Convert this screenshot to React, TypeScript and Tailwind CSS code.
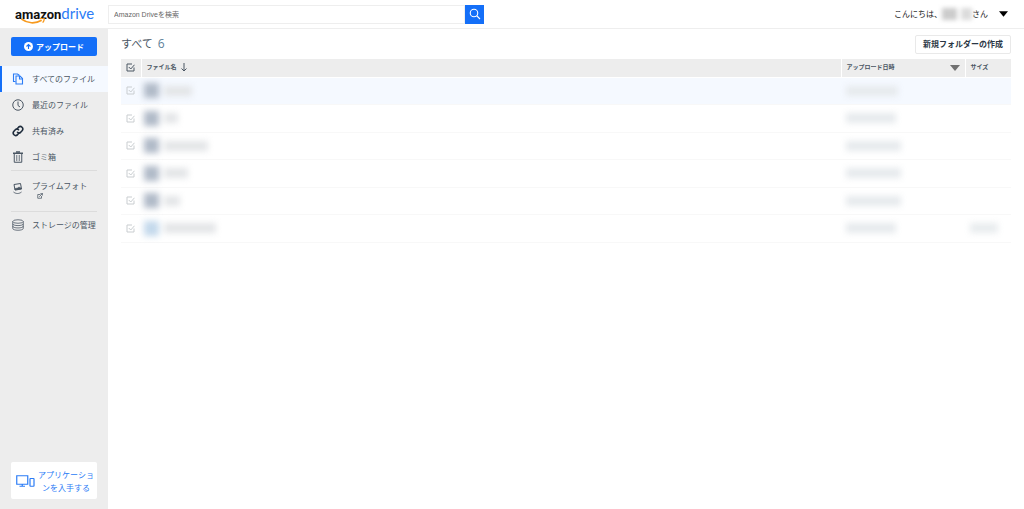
import { useState } from 'react'

type Row = { name: string; kind: string; date: string; size?: string }

// hidden values are drawn as blurred bars, these are the widths
const rows: Row[] = [
  { name: 'w-[28px]', kind: 'folder', date: 'w-[52px]' },
  { name: 'w-[14px]', kind: 'folder', date: 'w-[50px]' },
  { name: 'w-[44px]', kind: 'folder', date: 'w-[55px]' },
  { name: 'w-[24px]', kind: 'folder', date: 'w-[55px]' },
  { name: 'w-[16px]', kind: 'folder', date: 'w-[55px]' },
  { name: 'w-[52px]', kind: 'file', date: 'w-[50px]', size: 'w-[28px]' },
]

function CheckIcon({ className }: { className: string }) {
  return (
    <svg viewBox="0 0 18 18" className={'block h-[9px] w-[9px] ' + className} fill="none" stroke="currentColor" strokeWidth="2">
      <path d="M12 2H2v14h14V9" />
      <path d="M5.5 8l4 4L17 3.5" />
    </svg>
  )
}

function FilesIcon() {
  return (
    <svg viewBox="0 0 24 24" className="h-3 w-3 text-[#2b7cf6]" fill="none" stroke="currentColor" strokeWidth="2.2">
      <path d="M7 17H3V2h8l4 3" />
      <path d="M8 6h8l5 5v11H8z" />
      <path d="M15 6v6h6" />
    </svg>
  )
}

function ClockIcon() {
  return (
    <svg viewBox="0 0 24 24" className="h-3 w-3" fill="none" stroke="currentColor" strokeWidth="2">
      <circle cx="12" cy="12" r="10.5" />
      <path d="M12 5v8l4 3" />
    </svg>
  )
}

function LinkIcon() {
  return (
    <svg viewBox="0 0 24 24" className="h-3 w-3 text-[#1f2d3d]" fill="none" stroke="currentColor" strokeWidth="3.2" strokeLinecap="round">
      <path d="M10 8l3.5-4a5 5 0 0 1 7 7L17 15a5 5 0 0 1-6-.5" />
      <path d="M14 16l-3.5 4a5 5 0 0 1-7-7L7 9a5 5 0 0 1 6 .5" />
    </svg>
  )
}

function TrashIcon() {
  return (
    <svg viewBox="0 0 24 24" className="h-3 w-3" fill="none" stroke="currentColor" strokeWidth="2">
      <path d="M2 4.5h20" strokeWidth="3" />
      <path d="M8 2h8" strokeWidth="3" />
      <path d="M4.5 5v17.5h15V5" />
      <path d="M9.5 8v12M14.5 8v12" strokeWidth="1.6" />
    </svg>
  )
}

function PhotoIcon() {
  return (
    <svg viewBox="0 0 24 24" className="h-3 w-3" fill="none" stroke="currentColor" strokeWidth="2">
      <path d="M4 3l13-2 2 11-13 2z" />
      <path d="M6 11l5-1 3-2 4 2 1 2-13 2z" fill="currentColor" strokeWidth="1" />
      <path d="M3 18c5 4 11 4 16 0" strokeWidth="1.8" />
    </svg>
  )
}

function StorageIcon() {
  return (
    <svg viewBox="0 0 24 24" className="h-3 w-3" fill="none" stroke="currentColor" strokeWidth="1.6">
      <ellipse cx="12" cy="5" rx="10.5" ry="3.5" />
      <path d="M1.5 5v14c0 2 4.5 3.5 10.5 3.5s10.5-1.5 10.5-3.5V5" />
      <path d="M1.5 9.7c0 2 4.5 3.5 10.5 3.5s10.5-1.5 10.5-3.5M1.5 14.4c0 2 4.5 3.5 10.5 3.5s10.5-1.5 10.5-3.5" />
    </svg>
  )
}

function Logo() {
  return (
    <a href="#" className="relative ml-[15px] flex w-[93px] shrink-0 items-baseline leading-6">
      <span className="font-['Roboto',sans-serif] text-[13px] font-bold text-[#111]">amazon</span>
      <span className="font-['Lato',sans-serif] text-[15px] text-[#2b7cf6]">drive</span>
      <svg viewBox="0 0 72 18" className="absolute left-[6px] top-[17px] h-[6px] w-6" fill="none">
        <path d="M1 3c18 14 42 15 61 4" stroke="#f79a1e" strokeWidth="5" />
        <path d="M56 2c6-2 12-2 13 0s-1 8-4 12" stroke="#f79a1e" strokeWidth="4" />
      </svg>
    </a>
  )
}

const navItem = 'flex h-[26px] items-center border-l-2 pl-[10px] text-[8px]'

export default function App() {
  const [query, setQuery] = useState('')

  return (
    <div className="flex min-h-screen flex-col bg-white font-['Open_Sans','Noto_Sans_CJK_JP',sans-serif] text-[#4a5663]">
      <header className="flex h-[29px] items-center border-b border-[#eeeeee]">
        <Logo />
        <form className="flex w-[376px]" onSubmit={e => e.preventDefault()}>
          <input
            type="search"
            aria-label="Amazon Driveを検索"
            placeholder="Amazon Driveを検索"
            value={query}
            onChange={e => setQuery(e.target.value)}
            className="h-[19px] min-w-0 flex-1 border border-[#eeeeee] px-[5px] font-['Liberation_Sans','Noto_Sans_CJK_JP',sans-serif] text-[7px] placeholder:text-[#666] focus:outline-none"
          />
          <button aria-label="検索" className="flex h-[19px] w-[19px] items-center justify-center bg-[#146ff8] text-white">
            <svg viewBox="0 0 24 24" className="h-3 w-3" fill="none" stroke="currentColor" strokeWidth="2.2">
              <circle cx="10" cy="10" r="7.5" />
              <path d="M15.5 15.5L22 22" />
            </svg>
          </button>
        </form>
        <button className="ml-auto mr-4 flex items-center text-[8px] text-[#222]">
          <span>こんにちは、</span>
          <span className="flex w-[30px] gap-1 blur-[2px]">
            <span className="h-[12px] w-[15px] bg-[#cccccc]" />
            <span className="h-[12px] w-[11px] bg-[#dcdcdc]" />
          </span>
          <span>さん</span>
          <svg viewBox="0 0 10 6" className="ml-[11px] h-[6px] w-[9px]">
            <path d="M0 0h10L5 6z" fill="#000" />
          </svg>
        </button>
      </header>

      <div className="flex flex-1">
        <nav className="flex w-[108px] shrink-0 flex-col bg-[#ededed]">
          <button className="mx-[11px] mb-[10px] mt-2 flex h-[19px] items-center justify-center gap-[3px] rounded-[2px] bg-[#146ff8] text-[8px] font-bold text-white">
            <svg viewBox="0 0 18 18" className="h-[9px] w-[9px]">
              <circle cx="9" cy="9" r="9" fill="#fff" />
              <path d="M9 14V5M5 9l4-4 4 4" fill="none" stroke="#146ff8" strokeWidth="2.2" />
            </svg>
            アップロード
          </button>

          <a href="#" className={navItem + ' border-[#146ff8] bg-[#f5f9ff]'}>
            <span className="flex w-5"><FilesIcon /></span>すべてのファイル
          </a>
          <a href="#" className={navItem + ' border-transparent'}>
            <span className="flex w-5"><ClockIcon /></span>最近のファイル
          </a>
          <a href="#" className={navItem + ' border-transparent'}>
            <span className="flex w-5"><LinkIcon /></span>共有済み
          </a>
          <a href="#" className={navItem + ' border-transparent'}>
            <span className="flex w-5"><TrashIcon /></span>ゴミ箱
          </a>
          <hr className="mx-[11px] border-[#dcdcdc]" />
          <a href="#" className="flex h-10 items-center pb-1 pl-3 text-[8px]">
            <span className="flex w-5"><PhotoIcon /></span>
            <span className="flex flex-col leading-[11px]">
              プライムフォト
              <svg viewBox="0 0 16 16" className="ml-[5px] mt-[2px] h-[6px] w-[6px]" fill="none" stroke="currentColor" strokeWidth="2">
                <path d="M9 4H2v10h10V8M6 10l8-8M9 1h6v6" />
              </svg>
            </span>
          </a>
          <hr className="mx-[11px] border-[#dcdcdc]" />
          <a href="#" className={navItem + ' border-transparent'}>
            <span className="flex w-5"><StorageIcon /></span>ストレージの管理
          </a>

          <a href="#" className="mx-[11px] mb-[10px] mt-auto flex h-[37px] items-center rounded-[2px] bg-white pl-[5px] text-[#2b7cf6]">
            <svg viewBox="0 0 38 24" className="h-3 w-[19px] shrink-0" fill="none" stroke="currentColor" strokeWidth="2.4">
              <path d="M1.5 1.500h22v17h-22z" />
              <path d="M12.5 18v4M7 22.500h11" />
              <rect x="28" y="7" width="8" height="15.500" rx="1" />
            </svg>
            <span className="min-w-0 flex-1 px-[2px] text-center text-[8px] leading-[13px]">アプリケーションを入手する</span>
          </a>
        </nav>

        <main className="min-w-0 flex-1 px-[13px]">
          <div className="flex h-[30px] items-center justify-between">
            <h1 className="text-[11px]">すべて<span className="ml-[5px] text-[12px] text-[#5c7f99]">6</span></h1>
            <button className="h-[19px] rounded-[2px] border border-[#e9e9e9] px-[7px] text-[8px] font-bold text-[#2a3644]">
              新規フォルダーの作成
            </button>
          </div>

          <table className="w-full table-fixed border-collapse text-left">
            <thead>
              <tr className="h-[18px] border-b border-white bg-[#ededed] text-[6px]">
                <th className="w-5 border-r border-white pl-[5px]">
                  <button aria-label="すべて選択" className="block"><CheckIcon className="text-[#4a5663]" /></button>
                </th>
                <th className="border-r border-white pl-[5px]">
                  <button className="flex items-center gap-[4px] font-bold">
                    ファイル名
                    <svg viewBox="0 0 12 18" className="h-[9px] w-[6px]" fill="none" stroke="currentColor" strokeWidth="2">
                      <path d="M6 0v16M1 11l5 5 5-5" />
                    </svg>
                  </button>
                </th>
                <th className="w-[124px] border-r border-white px-[5px]">
                  <button className="flex w-full items-center justify-between font-bold">
                    アップロード日時
                    <svg viewBox="0 0 10 6" className="h-[6px] w-[10px]">
                      <path d="M0 0h10L5 6z" fill="#707070" />
                    </svg>
                  </button>
                </th>
                <th className="w-[46px] pl-[5px]">サイズ</th>
              </tr>
            </thead>
            <tbody>
              {rows.map((row, i) => (
                <tr key={i} className="border-b border-[#f8f8f8] odd:h-[27px] even:h-[28px] first:bg-[#f5f9ff]">
                  <td className="pl-[5px]">
                    <button aria-label="選択" className="block"><CheckIcon className="text-[#c9cdd0]" /></button>
                  </td>
                  <td className="pl-[3px]">
                    <div className="flex items-center gap-[5px] blur-[3px]">
                      <span className={'h-[15px] w-[15px] ' + (row.kind === 'folder' ? 'bg-[#b0bac8]' : 'bg-[#c4d9ec]')} />
                      <span className={'h-[10px] bg-[#e3e5e7] ' + row.name} />
                    </div>
                  </td>
                  <td className="pl-[5px]">
                    <div className={'h-[10px] bg-[#e6eaed] blur-[3px] ' + row.date} />
                  </td>
                  <td className="pl-[5px]">
                    {row.size && <div className={'h-[10px] bg-[#e8ecee] blur-[3px] ' + row.size} />}
                  </td>
                </tr>
              ))}
            </tbody>
          </table>
        </main>
      </div>
    </div>
  )
}
